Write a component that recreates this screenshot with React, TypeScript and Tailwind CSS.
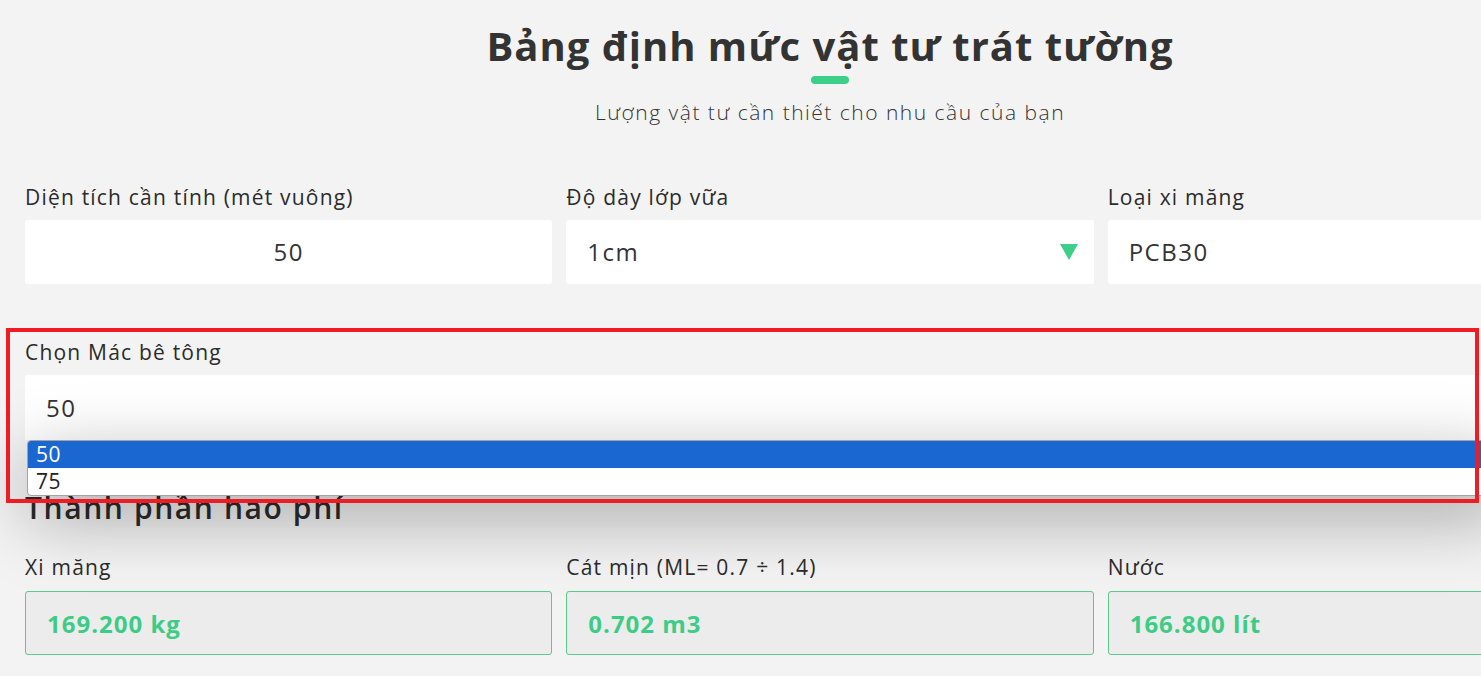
export default function App() {
  return (
    <div className="relative h-[676px] w-full overflow-hidden bg-[#f3f3f3] font-['Open_Sans',sans-serif] text-[#2b2b2b]">
      <div className="w-[1660px] px-[25px]">
        {/* Header */}
        <div className="flex flex-col items-center pt-[22px]">
          <h1 className="text-[40px] font-bold leading-[48px] tracking-[1px] text-[#333]">Bảng định mức vật tư trát tường</h1>
          <div className="mt-[6px] h-[8px] w-[38px] rounded-full bg-[#3ccf89]" />
          <p className="mt-[14px] text-[21px] font-light leading-[28px] tracking-[1.5px] text-[#333]">Lượng vật tư cần thiết cho nhu cầu của bạn</p>
        </div>

        {/* Inputs */}
        <div className="mt-[58px] grid grid-cols-3 gap-[14px]">
          <div>
            <label className="block text-[21px] leading-[26px] tracking-[1.2px]">Diện tích cần tính (mét vuông)</label>
            <div className="mt-[10px] flex h-[64px] items-center justify-center rounded-[3px] bg-white text-[24px] tracking-[1.5px] text-[#333]">50</div>
          </div>
          <div>
            <label className="block text-[21px] leading-[26px] tracking-[1.2px]">Độ dày lớp vữa</label>
            <div className="mt-[10px] flex h-[64px] items-center justify-between rounded-[3px] bg-white pl-[21px] pr-[16px] text-[24px] tracking-[1.5px] text-[#333]">
              <span>1cm</span>
              <svg width="18" height="16" viewBox="0 0 18 16">
                <polygon points="0,0 18,0 9,16" fill="#3ccf89" />
              </svg>
            </div>
          </div>
          <div>
            <label className="block text-[21px] leading-[26px] tracking-[1.2px]">Loại xi măng</label>
            <div className="mt-[10px] flex h-[64px] items-center rounded-[3px] bg-white pl-[21px] text-[24px] tracking-[1.5px] text-[#333]">PCB30</div>
          </div>
        </div>

        {/* Mác bê tông */}
        <div className="relative mt-[55px]">
          <label className="block text-[21px] leading-[26px] tracking-[1.2px]">Chọn Mác bê tông</label>
          <div className="mt-[10px] flex h-[65px] items-center bg-white pl-[21px] text-[24px] tracking-[1.5px] text-[#333]">50</div>
        </div>

        {/* Thành phần hao phí */}
        <h2 className="mt-[50px] text-[30px] font-semibold leading-[36px] tracking-[1.6px] text-[#2b2b2b]">Thành phần hao phí</h2>

        <div className="mt-[28px] grid grid-cols-3 gap-[14px]">
          <div>
            <label className="block text-[21px] leading-[26px] tracking-[1.2px]">Xi măng</label>
            <div className="mt-[11px] flex h-[64px] items-center rounded-[3px] border border-[#5cc98e] bg-[#ececec] pl-[21px] pt-[2px] text-[24px] font-bold tracking-[1px] text-[#3dcc85]">169.200 kg</div>
          </div>
          <div>
            <label className="block text-[21px] leading-[26px] tracking-[1.2px]">Cát mịn (ML= 0.7 ÷ 1.4)</label>
            <div className="mt-[11px] flex h-[64px] items-center rounded-[3px] border border-[#5cc98e] bg-[#ececec] pl-[21px] pt-[2px] text-[24px] font-bold tracking-[1px] text-[#3dcc85]">0.702 m3</div>
          </div>
          <div>
            <label className="block text-[21px] leading-[26px] tracking-[1.2px]">Nước</label>
            <div className="mt-[11px] flex h-[64px] items-center rounded-[3px] border border-[#5cc98e] bg-[#ececec] pl-[21px] pt-[2px] text-[24px] font-bold tracking-[1px] text-[#3dcc85]">166.800 lít</div>
          </div>
        </div>
      </div>

      {/* Open select list */}
      <div className="absolute left-[27px] top-[440px] w-[1480px] overflow-hidden rounded-l-[4px] border border-[#a3a3a3] bg-white text-[21px] leading-[27px] tracking-[0.5px] shadow-[0_20px_70px_rgba(0,0,0,0.35)]">
        <div className="bg-[#1a67d2] pl-[8px] text-white">50</div>
        <div className="pl-[8px] text-[#222]">75</div>
      </div>

      {/* Annotation box */}
      <div className="pointer-events-none absolute left-[6px] top-[328px] h-[175px] w-[1473px] border-[4px] border-[#ee1c25]" />
    </div>
  );
}
